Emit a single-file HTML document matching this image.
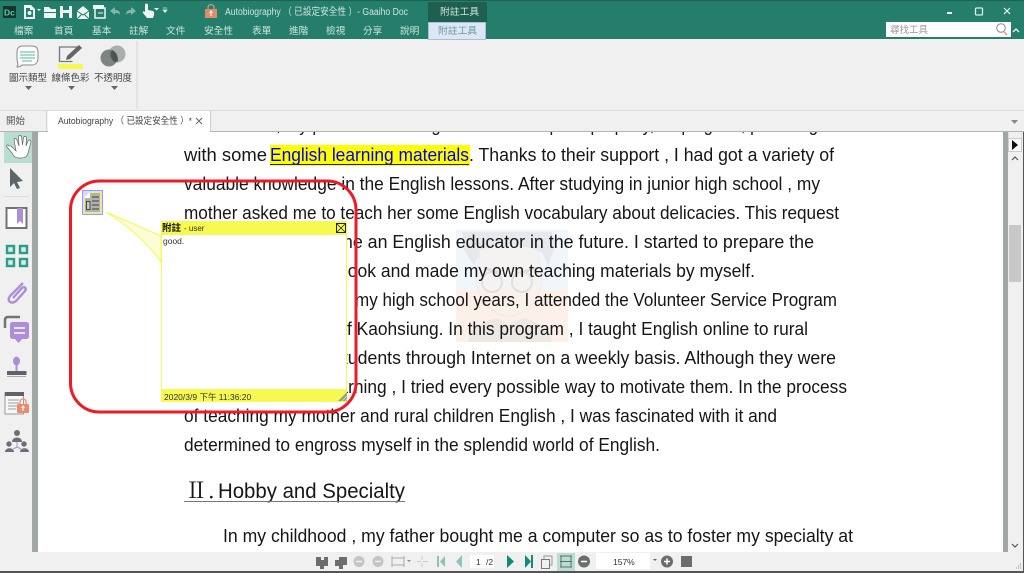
<!DOCTYPE html>
<html lang="zh-Hant"><head><meta charset="utf-8"><title>Autobiography - Gaaiho Doc</title>
<style>
html,body{margin:0;padding:0}
body{width:1024px;height:573px;overflow:hidden;position:relative;background:#fff;font-family:"Liberation Sans","Noto Sans CJK TC",sans-serif}
svg{position:absolute;left:0;top:0;display:block;filter:blur(.3px)}
.d text{font-family:"Liberation Sans",sans-serif;font-size:18.500px;fill:#161616}
.u text{font-family:"Liberation Sans","Noto Sans CJK TC",sans-serif}
</style></head><body>
<svg class="d" width="1024" height="573" viewBox="0 0 1024 573">
<!-- watermark -->
<rect x="456" y="230" width="112" height="60" fill="#f1f6fb"/>
<rect x="456" y="290" width="112" height="52" fill="#fcf0e9"/>
<g opacity=".55">
<path d="M462 232h90l4 12-8 22-6-14-60-4-8 18-10-16z" fill="#dedede"/>
<path d="M480 250c15-6 40-6 58 0l4 30c-2 22-18 36-33 36s-30-14-33-36z" fill="#f9f2ec" stroke="#e4e4e4"/>
<path d="M484 268l16 5M536 268l-16 5" stroke="#ccc" stroke-width="3"/>
<circle cx="492" cy="282" r="10" fill="none" stroke="#cfcfcf" stroke-width="2"/><circle cx="522" cy="282" r="10" fill="none" stroke="#cfcfcf" stroke-width="2"/>
<path d="M468 342c2-14 14-20 28-24l14 6 14-6c14 4 26 10 28 24z" fill="#e2e2e0"/>
</g>
<!-- text -->
<text x="184" y="131" textLength="662" lengthAdjust="spacingAndGlyphs">Furthermore, my parents also taught me how to speak properly, helping me, providing me</text>
<rect x="270" y="145" width="200" height="21" fill="#ffff00"/>
<text x="184" y="161" textLength="83" lengthAdjust="spacingAndGlyphs">with some</text>
<text x="270" y="161" textLength="199" lengthAdjust="spacingAndGlyphs" style="fill:#0000ee">English learning materials</text>
<rect x="270" y="164" width="199" height="1" fill="#222200"/>
<text x="469" y="161" textLength="365" lengthAdjust="spacingAndGlyphs">. Thanks to their support , I had got a variety of</text>
<text x="184" y="190" textLength="636" lengthAdjust="spacingAndGlyphs">valuable knowledge in the English lessons. After studying in junior high school , my</text>
<text x="184" y="219" textLength="655" lengthAdjust="spacingAndGlyphs">mother asked me to teach her some English vocabulary about delicacies. This request</text>
<text x="338" y="248" textLength="476" lengthAdjust="spacingAndGlyphs">me an English educator in the future. I started to prepare the</text>
<text x="338" y="277" textLength="417" lengthAdjust="spacingAndGlyphs">book and made my own teaching materials by myself.</text>
<text x="355" y="306" textLength="482" lengthAdjust="spacingAndGlyphs">my high school years, I attended the Volunteer Service Program</text>
<text x="347" y="335" textLength="461" lengthAdjust="spacingAndGlyphs">f Kaohsiung. In this program , I taught English online to rural</text>
<text x="334" y="364" textLength="502" lengthAdjust="spacingAndGlyphs">students through Internet on a weekly basis. Although they were</text>
<text x="325" y="393" textLength="522" lengthAdjust="spacingAndGlyphs">learning , I tried every possible way to motivate them. In the process</text>
<text x="184" y="422" textLength="593" lengthAdjust="spacingAndGlyphs">of teaching my mother and rural children English , I was fascinated with it and</text>
<text x="184" y="451" textLength="476" lengthAdjust="spacingAndGlyphs">determined to engross myself in the splendid world of English.</text>
<text x="185" y="498" textLength="30" lengthAdjust="spacingAndGlyphs" style="font-family:'Noto Serif CJK SC',serif;font-size:22px">Ⅱ.</text>
<text x="218" y="498" textLength="187" lengthAdjust="spacingAndGlyphs" style="font-size:21.500px">Hobby and Specialty</text>
<rect x="184" y="501" width="221" height="1" fill="#777"/>
<text x="223" y="542" textLength="630" lengthAdjust="spacingAndGlyphs">In my childhood , my father bought me a computer so as to foster my specialty at</text>
</svg>

<svg class="u" width="1024" height="573" viewBox="0 0 1024 573">
<!-- popup -->
<path d="M106 212L161 236V262C146 240 125 224 106 212Z" fill="#fdfdd8" stroke="#f5f950"/>
<rect x="161.500" y="221.500" width="185" height="180" fill="#fff" stroke="#f5f950"/>
<rect x="161" y="221" width="186" height="14" fill="#f5f950"/>
<rect x="161" y="389" width="186" height="13" fill="#f5f950"/>
<text x="162" y="231" font-size="9.500" font-weight="700" fill="#111">附註</text>
<text x="184" y="231" font-size="8" fill="#333">- user</text>
<rect x="336.500" y="223.500" width="9" height="9" fill="none" stroke="#222"/><path d="M336.500 223.500l9 9M345.500 223.500l-9 9" stroke="#222" stroke-width=".8"/>
<text x="163" y="244" font-size="8.500" fill="#333">good.</text>
<text x="164" y="400" font-size="8.500" fill="#333">2020/3/9 下午 11:36:20</text>
<path d="M347 392v9h-9z" fill="#999"/>
<path d="M342 401l5-5M345 401l2-2" stroke="#f5f950" stroke-width=".7"/>
<!-- note icon -->
<rect x="82.500" y="190.500" width="20" height="24" fill="#dcdcf8" stroke="#9999ff"/>
<path d="M84 198l6-6h11v21H84z" fill="#f3f350"/><path d="M85 198l5-5h10v19H85z" fill="#b2b2ae"/>
<path d="M84 198l6-6v6z" fill="#fff"/>
<rect x="86.500" y="201.500" width="3.500" height="8" fill="#ccc" stroke="#444"/>
<path d="M92 197h7M92 201h7M92 205h7M92 209h7" stroke="#555" stroke-width="1.200"/>
<!-- red outline -->
<rect x="70.500" y="181" width="285.500" height="231" rx="29" fill="none" stroke="#ee1b24" stroke-width="3"/>

<!-- left sidebar -->
<rect x="0" y="131" width="32" height="421" fill="#f0f0f0"/>
<rect x="32" y="131" width="6" height="421" fill="#a1a6a6"/>
<rect x="4" y="132" width="28" height="31" fill="#b9dcd3"/>
<path d="M11 146l5 5-2-11c0-2 2-2 3 0l2 6-.500-9c0-2 3-2 3 0l1 8 1-7c0-2 3-2 3 0l-.500 8 2-5c1-2 3-1 3 1l-3 11c-1 4-3 5-8 5-4 0-6-1-8-5l-5-6c-1-2 1-3 2-1z" fill="#fff" stroke="#666" stroke-width=".7"/>
<path d="M10 168v19l4-4 3 6 3-1-3-6 6-1z" fill="#5f6468"/>
<rect x="4" y="196" width="25" height="1" fill="#ddd"/>
<rect x="6.500" y="208" width="20" height="20" fill="#fff" stroke="#6f7477" stroke-width="2"/>
<path d="M17 208h6v16l-3-3-3 3z" fill="#ad8ed8"/>
<g fill="#d8ebe7" stroke="#2c9c8b" stroke-width="2.400"><rect x="7" y="246" width="7" height="7"/><rect x="20" y="246" width="7" height="7"/><rect x="7" y="259" width="7" height="7"/><rect x="20" y="259" width="7" height="7"/></g>
<path d="M24 285l-13 13c-4 5 2 9 6 5l9-10c2-3-1-5-3-3l-9 10" transform="translate(-1 -2)" fill="none" stroke="#ad8ed8" stroke-width="2.400"/>
<path d="M5 328v-8c0-2 1-3 3-3h12" fill="none" stroke="#6f7477" stroke-width="2.500"/>
<rect x="10" y="322" width="19" height="17" rx="2.500" fill="#ad8ed8"/><path d="M15 339h7l-3.500 4z" fill="#ad8ed8"/>
<path d="M14 328h11M14 333h11" stroke="#fff" stroke-width="1.500"/>
<ellipse cx="16.500" cy="361" rx="3.500" ry="4.500" fill="#ad8ed8"/><rect x="15.500" y="364" width="2" height="7" fill="#ad8ed8"/>
<rect x="7" y="371" width="19.500" height="4" fill="#5f6468"/><rect x="7" y="376" width="19" height="1" fill="#aaa"/>
<rect x="5" y="393" width="18.500" height="21" fill="#f8f8f8" stroke="#999"/><rect x="5" y="392" width="19" height="4" fill="#5f6468"/>
<path d="M8 400h11M8 403h11M8 406h11M8 409h8" stroke="#bbb" stroke-width="1.500"/>
<rect x="17" y="404" width="12" height="9" rx="1" fill="#e98c6c"/><path d="M20 404v-2c0-4 6-4 6 0v2" fill="none" stroke="#e98c6c" stroke-width="1.300"/><path d="M23 406v5M21.500 408l1.500-2 1.500 2" stroke="#fff" fill="none"/>
<g fill="#6c7074"><circle cx="17" cy="433" r="3"/><path d="M12 442c0-6 10-6 10 0z"/><circle cx="9" cy="444" r="2.700"/><path d="M5 452c0-5 9-5 9 0z"/><circle cx="24" cy="444" r="2.700"/><path d="M20 452c0-5 9-5 9 0z"/></g>
<path d="M17 442v5M17 447l-4 2M17 447l4 2" stroke="#ad8ed8" fill="none"/>

<!-- right side -->
<rect x="1003" y="131" width="5" height="421" fill="#a1a6a6"/>
<rect x="1008" y="131" width="15" height="421" fill="#f0f0f0"/>
<rect x="1008.500" y="131.500" width="13" height="7" fill="#f0f0f0" stroke="#ddd"/>
<rect x="1008.500" y="138.500" width="13" height="13" fill="#fafafa" stroke="#ccc"/>
<path d="M1012 140v10l6-5z" fill="#111"/>
<path d="M1012 160l3-3 3 3M1012 544l3 3 3-3" fill="none" stroke="#555" stroke-width="1.200"/>
<rect x="1009" y="225" width="12" height="57" fill="#c8c8c8"/>

<!-- bottom bar -->
<rect x="0" y="552" width="1024" height="20" fill="#f0f0f0"/>
<rect x="557" y="553" width="18" height="18" fill="#b9dcd3"/>
<g fill="#6a6e70">
<path d="M316 557h5v3h3v-3h4v9h-4v3h-4v-3h-4z"/><path d="M335 560h4v-3h8v8h-4v4h-4v-3h-4z"/>
<circle cx="359" cy="561.500" r="5.500" fill="#c4c4c4"/><circle cx="378" cy="561.500" r="5.500" fill="#c4c4c4"/>
<circle cx="584" cy="561.500" r="6"/><circle cx="667" cy="561.500" r="6"/>
<rect x="681" y="556" width="11" height="11"/>
</g>
<path d="M356 561.500h6M381 561.500h-6" stroke="#f0f0f0" stroke-width="1.500"/>
<path d="M581 561.500h6M664 561.500h6M667 558.500v6" stroke="#fff" stroke-width="1.500"/>
<path d="M392 556v11M404 556v11M392 558h12M392 565h12" fill="none" stroke="#aaa"/>
<path d="M407 560l2 2 2-2" fill="#888"/>
<path d="M422 556v4M422 563v4M417 561.500h4M423 561.500h5" stroke="#ccc" fill="none"/>
<path d="M437 556h2v11h-2z M445 556v11l-5-5.500z" fill="#8dc3b8"/>
<path d="M462 555v13l-6-6.500z" fill="#8dc3b8"/>
<rect x="470" y="555" width="24" height="13" fill="#fff"/>
<text x="476" y="565" font-size="8.500" fill="#333">1</text>
<text x="486" y="565" font-size="8.500" fill="#333">/2</text>
<path d="M507 555v13l7-6.500z" fill="#128a78"/>
<path d="M525 555v13l6-6.500z M531 555h2v13h-2z" fill="#128a78"/>
<rect x="541.500" y="559.500" width="8" height="9" fill="#f0f0f0" stroke="#777"/><path d="M544 559v-3h8v9h-2" fill="none" stroke="#999"/>
<path d="M560 556h12M560 567h12M561 556v11M571 556v11M560 561.500h12" fill="none" stroke="#5f6f6c"/>
<rect x="596" y="553" width="54" height="16" fill="#fff"/>
<text x="613" y="565" font-size="8.500" fill="#333">157%</text>
<path d="M653 559l2 2 2-2z" fill="#666"/>
<rect x="0" y="571" width="1024" height="2" fill="#555"/>
<rect x="1023" y="131" width="1" height="442" fill="#555"/>
<path d="M1018 568h1M1020 568h1M1020 566h1M1016 568h1M1018 566h1M1020 564h1" stroke="#999"/>

<!-- ribbon -->
<rect x="0" y="0" width="1024" height="39" fill="#257d6b"/>
<rect x="0" y="0" width="1024" height="1" fill="#1d6153"/>
<rect x="0" y="39" width="1024" height="71" fill="#f0f0f0"/>
<rect x="0" y="110" width="1024" height="1" fill="#dcdcdc"/>
<rect x="0" y="111" width="1024" height="20" fill="#f0f0f0"/>
<rect x="0" y="131" width="1024" height="1" fill="#b5b5b5"/>
<rect x="136" y="41" width="2" height="68" fill="#e3e3e3"/>
<rect x="46" y="110" width="1" height="21" fill="#d8d8d8"/>
<rect x="48" y="111" width="162" height="21" fill="#fff"/>
<rect x="210" y="110" width="1" height="21" fill="#d0d0d0"/>
<text x="6" y="124" font-size="9.500" fill="#555">開始</text>
<text x="58" y="124" font-size="9.500" fill="#444" textLength="134" lengthAdjust="spacingAndGlyphs">Autobiography （ 已設定安全性 ）*</text>
<path d="M196 118l6 6M202 118l-6 6" stroke="#666"/>
<path d="M1011 120h7l-3.500 4z" fill="#888"/>

<!-- app logo / QAT -->
<rect x="3" y="6" width="13" height="12" fill="#17352c"/>
<text x="4" y="15.500" font-size="8.500" font-weight="700" fill="#4fd0a8">Dc</text>
<g fill="#eef6f3" stroke="none">
<path d="M24 5h7l4 4v10H24zM26 8v9h7v-7h-3V8z"/><circle cx="29.500" cy="13" r="2"/>
<path d="M37 9h4l-2 2z"/>
<path d="M44 7h5l2 2h5v3H44zM44 13h12v5H44z"/>
<path d="M60 6h12v12H60zM63 6v4h6V6zM63 13v5h6v-5z"/>
<path d="M77 11l6-5 6 5v8H77z"/>
</g>
<path d="M77 11l6 4 6-4M77 19l5-5M89 19l-5-5" stroke="#257d6b" fill="none"/>
<rect x="95" y="8" width="10" height="10" fill="none" stroke="#eef6f3" stroke-width="1.500"/><rect x="93" y="5" width="11" height="4" fill="#eef6f3"/>
<path d="M98 13h5" stroke="#eef6f3"/>
<path d="M110 11l5-4v3c3 0 5 1 5 5-1-2-3-2-5-2v2z" fill="#83b5aa"/>
<path d="M136 11l-5-4v3c-3 0-5 1-5 5 1-2 3-2 5-2v2z" fill="#83b5aa"/>
<path d="M145 5c0-2 3-2 3 0v5l5 1c2 1 1 5 0 7h-6l-4-5c-1-2 1-2 2-1z" fill="#eef6f3"/>
<path d="M154 8h5l-2.500 2.500z" fill="#eef6f3"/>
<path d="M163 8h4M163 10h4l-2 2.500z" stroke="#d5e8e3" stroke-width=".8" fill="#d5e8e3"/>
<!-- title -->
<rect x="205" y="9" width="12" height="9" fill="#e08a6c"/><path d="M208 9V7c0-3 6-3 6 0v2" fill="none" stroke="#d8b0a0"/><path d="M211 11v5M209.500 13l1.500-2 1.500 2" stroke="#fff" fill="none"/>
<text x="225" y="15" font-size="10" fill="#cfe3dd" textLength="183" lengthAdjust="spacingAndGlyphs">Autobiography （ 已設定安全性 ）- Gaaiho Doc</text>
<rect x="428" y="2" width="59" height="20" fill="#1f5f50"/>
<text x="440" y="15" font-size="9.800" fill="#cfe3dd">附註工具</text>
<rect x="428.500" y="22.500" width="57" height="17" fill="#dce6f7" stroke="#a9bfd2"/>
<text x="438" y="34" font-size="9.800" fill="#6f9c96">附註工具</text>
<g font-size="9.700" fill="#cfe3dd">
<text x="14" y="34">檔案</text><text x="54" y="34">首頁</text><text x="92" y="34">基本</text><text x="129" y="34">註解</text><text x="166" y="34">文件</text><text x="204" y="34">安全性</text><text x="252" y="34">表單</text><text x="289" y="34">進階</text><text x="326" y="34">檢視</text><text x="363" y="34">分享</text><text x="400" y="34">說明</text>
</g>
<!-- window controls -->
<rect x="947" y="12" width="5" height="2" fill="#eef6f3"/>
<rect x="975.500" y="8" width="7" height="7" rx="1" fill="none" stroke="#dcece7" stroke-width="1.300"/>
<path d="M1004 8l6 6M1010 8l-6 6" stroke="#eef6f3" stroke-width="1.200"/>
<rect x="886" y="22" width="125" height="15" fill="#fff"/>
<text x="890" y="33" font-size="9.500" fill="#999">尋找工具</text>
<circle cx="1001" cy="28" r="4.300" fill="none" stroke="#888"/><path d="M1004 32l3 3" stroke="#e98c6c" stroke-width="1.300"/>
<path d="M1013 32l3-3 3 3" fill="none" stroke="#eef6f3" stroke-width="1.300"/>
<!-- ribbon icons -->
<path d="M18 65c-1 1-1 1-1 2 2 0 4-1 5-2h10c4 0 6-3 6-7v-6c0-4-2-6-6-6H23c-4 0-6 2-6 6v6c0 4 1 6 1 7z" fill="#fafafa" stroke="#8a8f8f"/>
<path d="M20 52h15M20 55h15M20 58h15M22 61h10" stroke="#7fc4b5" stroke-width="1.200"/>
<path d="M77 47H59.500v14.500h13" fill="none" stroke="#777" stroke-width="1.300"/>
<path d="M66 60l1-4 12-11 3 3-12 11z" fill="#666"/>
<rect x="58" y="64" width="25" height="5" fill="#f4f850"/>
<circle cx="117" cy="54" r="8.500" fill="#9da2a2" opacity=".85"/>
<circle cx="109" cy="58" r="8.500" fill="#757a7a" opacity=".92"/>
<path d="M112 50c4 2 6 5 6 11-3 2-5 0-6-2-2-3-2-6 0-9z" fill="#4e5252"/>
<g font-size="9.500" fill="#444">
<text x="9" y="81">圖示類型</text><text x="51.500" y="81">線條色彩</text><text x="94" y="81">不透明度</text>
</g>
<path d="M25 86h7l-3.500 4zM68 86h7l-3.500 4zM111 86h7l-3.500 4z" fill="#666"/>
</svg>
</body></html>
